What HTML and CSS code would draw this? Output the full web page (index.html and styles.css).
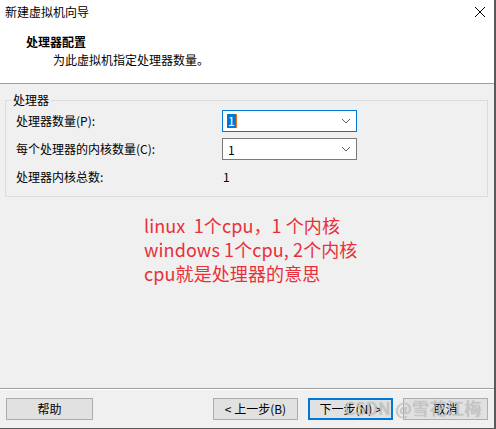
FILE: index.html
```html
<!DOCTYPE html>
<html lang="zh-CN">
<head>
<meta charset="utf-8">
<title>新建虚拟机向导</title>
<link rel="stylesheet" href="styles.css">
</head>
<body>
<div class="window">
  <div class="header">
    <div class="titlebar">
      <span class="title">新建虚拟机向导</span>
      <svg class="close" width="12" height="12" viewBox="0 0 12 12"><path d="M1 1L11 11M11 1L1 11" stroke="#000" stroke-width="1" fill="none"/></svg>
    </div>
    <div class="heading">处理器配置</div>
    <div class="subheading">为此虚拟机指定处理器数量。</div>
  </div>
  <div class="body">
    <fieldset class="group">
      <legend class="legend">处理器</legend>
      <div class="grid">
        <span class="label">处理器数量(P):</span>
        <div class="combo focused"><span class="sel">1</span><svg class="chev" width="10" height="6" viewBox="0 0 10 6"><path d="M1 1L5 5L9 1" stroke="#606060" stroke-width="1" fill="none"/></svg></div>
        <span class="label">每个处理器的内核数量(C):</span>
        <div class="combo"><span class="val">1</span><svg class="chev" width="10" height="6" viewBox="0 0 10 6"><path d="M1 1L5 5L9 1" stroke="#606060" stroke-width="1" fill="none"/></svg></div>
        <span class="label">处理器内核总数:</span>
        <span class="total">1</span>
      </div>
    </fieldset>
    <div class="note">
      <div>linux&nbsp; 1个cpu，1 个内核</div>
      <div>windows 1个cpu, 2个内核</div>
      <div>cpu就是处理器的意思</div>
    </div>
  </div>
  <div class="footer">
    <button class="btn help">帮助</button>
    <div class="nav">
      <button class="btn">&lt; 上一步(B)</button>
      <button class="btn primary">下一步(N) &gt;</button>
      <button class="btn">取消</button>
    </div>
    <span class="watermark">CSDN @雪花江梅</span>
  </div>
</div>
</body>
</html>
```

FILE: styles.css
```css
* { box-sizing: border-box; }
html, body {
  margin: 0;
  padding: 0;
  background: #ffffff;
}
body {
  font-family: "Noto Sans CJK SC", "Microsoft YaHei", sans-serif;
  font-size: 12px;
  color: #000;
  width: 496px;
  height: 429px;
  overflow: hidden;
}
.window {
  width: 496px;
  height: 429px;
  display: flex;
  flex-direction: column;
  background: #f0f0f0;
  border-right: 2px solid #5a5a5a;
  border-bottom: 1px solid #5a5a5a;
}
.header {
  background: #fff;
  height: 84px;
  border-bottom: 1px solid #a0a0a0;
  flex: none;
}
.titlebar {
  height: 24px;
  display: flex;
  align-items: center;
  justify-content: space-between;
  padding: 0 8px 0 5px;
}
.title {
  line-height: 24px;
  color: #000;
}
.close { display: block; }
.heading {
  margin-top: 10px;
  padding-left: 26px;
  font-weight: bold;
  line-height: 16px;
}
.subheading {
  margin-top: 2px;
  padding-left: 53px;
  line-height: 16px;
}
.body {
  flex: 1;
  display: flex;
  flex-direction: column;
}
.group {
  margin: 8px 6px 0 5px;
  padding: 0;
  border: 1px solid #dcdcdc;
  min-width: 0;
}
.legend {
  margin-left: 5px;
  padding: 0 2px;
  line-height: 16px;
}
.grid {
  display: grid;
  grid-template-columns: 206px 135px;
  grid-auto-rows: 22px;
  row-gap: 6px;
  align-items: center;
  padding: 2px 0 8px 10px;
}
.label { line-height: 22px; }
.combo {
  height: 22px;
  border: 1px solid #7a7a7a;
  background: #fff;
  display: flex;
  align-items: center;
  justify-content: space-between;
  padding: 0 4px 0 4px;
}
.combo.focused { border-color: #0078d7; }
.sel {
  background: #0078d7;
  color: #fff;
  line-height: 14px;
  padding: 0 1px;
  border-right: 1px solid #f07a1a;
}
.val { padding-left: 1px; }
.chev { display: block; margin-right: 1px; }
.total { padding-left: 1px; line-height: 22px; }
.note {
  margin: 16px 0 0 144px;
  color: #e8303a;
  font-size: 18px;
  line-height: 24px;
  letter-spacing: 0.1px;
}
.footer {
  position: relative;
  flex: none;
  height: 40px;
  border-top: 1px solid #a0a0a0;
  box-shadow: inset 0 1px 0 #ffffff;
  display: flex;
  align-items: flex-start;
  justify-content: space-between;
  padding: 9px 6px 0 6px;
}
.nav {
  display: flex;
  gap: 10px;
}
.btn {
  font-family: inherit;
  font-size: 12px;
  color: #000;
  height: 22px;
  width: 85px;
  padding: 0;
  background: #e1e1e1;
  border: 1px solid #adadad;
  line-height: 20px;
}
.btn.help { width: 87px; }
.btn.primary {
  border-color: #0078d7;
  box-shadow: inset 0 0 0 1px #0078d7;
}
.watermark {
  position: absolute;
  right: 12px;
  top: 8px;
  font-size: 17px;
  line-height: 22px;
  letter-spacing: 0.5px;
  color: rgba(205, 205, 205, 0.85);
  text-shadow: 0 0 1px rgba(110, 110, 110, 0.6);
  pointer-events: none;
}
```
